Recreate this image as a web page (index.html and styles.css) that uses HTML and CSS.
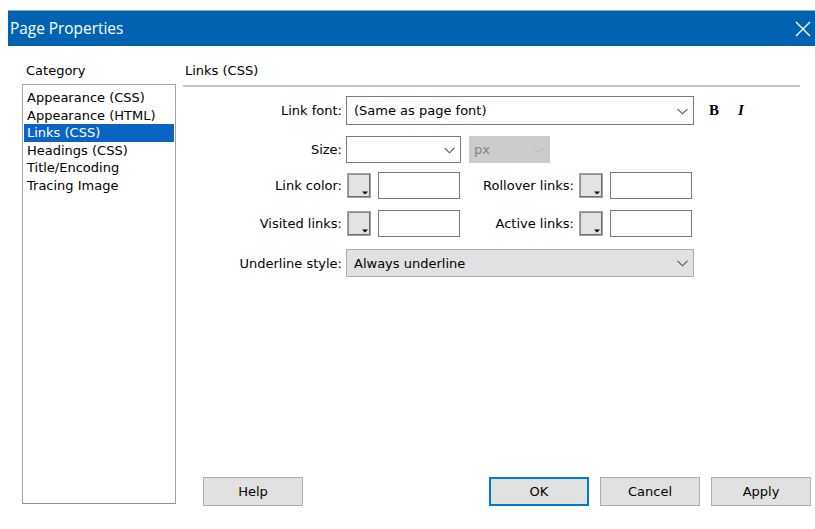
FILE: index.html
```html
<!DOCTYPE html>
<html lang="en">
<head>
<meta charset="utf-8">
<title>Page Properties</title>
<link rel="stylesheet" href="styles.css">
</head>
<body>
<div class="dialog">
  <header class="titlebar">
    <span class="title">Page Properties</span>
    <svg class="close" width="16" height="16" viewBox="0 0 16 16"><path d="M1 1L15 15M15 1L1 15" stroke="#fff" stroke-width="1.4" fill="none"/></svg>
  </header>

  <div class="body">
    <aside class="sidebar">
      <div class="caption">Category</div>
      <ul class="list">
        <li>Appearance (CSS)</li>
        <li>Appearance (HTML)</li>
        <li class="selected">Links (CSS)</li>
        <li>Headings (CSS)</li>
        <li>Title/Encoding</li>
        <li>Tracing Image</li>
      </ul>
    </aside>

    <main class="panel">
      <div class="caption heading">Links (CSS)</div>
      <div class="rule"></div>

      <div class="form">
        <div class="row r1">
          <label class="lbl">Link font:</label>
          <div class="select wide"><span>(Same as page font)</span>
            <svg class="chev" width="11" height="7" viewBox="0 0 11 7"><path d="M0.5 0.8L5.5 5.8L10.5 0.8" stroke="#555" stroke-width="1.1" fill="none"/></svg>
          </div>
          <span class="fmt bold">B</span>
          <span class="fmt italic">I</span>
        </div>

        <div class="row r2">
          <label class="lbl">Size:</label>
          <div class="select size">
            <svg class="chev" width="11" height="7" viewBox="0 0 11 7"><path d="M0.5 0.8L5.5 5.8L10.5 0.8" stroke="#555" stroke-width="1.1" fill="none"/></svg>
          </div>
          <div class="select unit disabled"><span>px</span>
            <svg class="chev" width="11" height="7" viewBox="0 0 11 7"><path d="M0.5 0.8L5.5 5.8L10.5 0.8" stroke="#bbb" stroke-width="1.1" fill="none"/></svg>
          </div>
        </div>

        <div class="row r3">
          <label class="lbl">Link color:</label>
          <span class="swatch"><svg width="24" height="25" viewBox="0 0 24 25"><rect x="0.5" y="0.5" width="23" height="24" fill="#e3e3e3" stroke="#a3a3a3"/><path d="M1.5 23V1.5H22" stroke="#8e8e8e" fill="none"/><path d="M22.5 1V23.5H1" stroke="#6c6c6c" fill="none"/><path d="M15 18.5H21L18 21.5Z" fill="#000"/></svg></span>
          <span class="textbox"></span>
          <label class="lbl lbl2">Rollover links:</label>
          <span class="swatch"><svg width="24" height="25" viewBox="0 0 24 25"><rect x="0.5" y="0.5" width="23" height="24" fill="#e3e3e3" stroke="#a3a3a3"/><path d="M1.5 23V1.5H22" stroke="#8e8e8e" fill="none"/><path d="M22.5 1V23.5H1" stroke="#6c6c6c" fill="none"/><path d="M15 18.5H21L18 21.5Z" fill="#000"/></svg></span>
          <span class="textbox"></span>
        </div>

        <div class="row r4">
          <label class="lbl">Visited links:</label>
          <span class="swatch"><svg width="24" height="25" viewBox="0 0 24 25"><rect x="0.5" y="0.5" width="23" height="24" fill="#e3e3e3" stroke="#a3a3a3"/><path d="M1.5 23V1.5H22" stroke="#8e8e8e" fill="none"/><path d="M22.5 1V23.5H1" stroke="#6c6c6c" fill="none"/><path d="M15 18.5H21L18 21.5Z" fill="#000"/></svg></span>
          <span class="textbox"></span>
          <label class="lbl lbl2">Active links:</label>
          <span class="swatch"><svg width="24" height="25" viewBox="0 0 24 25"><rect x="0.5" y="0.5" width="23" height="24" fill="#e3e3e3" stroke="#a3a3a3"/><path d="M1.5 23V1.5H22" stroke="#8e8e8e" fill="none"/><path d="M22.5 1V23.5H1" stroke="#6c6c6c" fill="none"/><path d="M15 18.5H21L18 21.5Z" fill="#000"/></svg></span>
          <span class="textbox"></span>
        </div>

        <div class="row r5">
          <label class="lbl">Underline style:</label>
          <div class="select wide grey"><span>Always underline</span>
            <svg class="chev" width="11" height="7" viewBox="0 0 11 7"><path d="M0.5 0.8L5.5 5.8L10.5 0.8" stroke="#555" stroke-width="1.1" fill="none"/></svg>
          </div>
        </div>
      </div>

      <div class="buttons">
        <button class="btn">Help</button>
        <span class="spacer"></span>
        <button class="btn default">OK</button>
        <button class="btn">Cancel</button>
        <button class="btn">Apply</button>
      </div>
    </main>
  </div>
</div>
</body>
</html>
```

FILE: styles.css
```css
* { box-sizing: border-box; }

html, body {
  margin: 0;
  padding: 0;
  background: #fff;
}

body {
  width: 815px;
  height: 529px;
  overflow: hidden;
  font-family: "DejaVu Sans", "Open Sans", sans-serif;
  font-size: 13px;
  color: #000;
}

.dialog {
  display: flex;
  flex-direction: column;
  height: 100%;
  padding-top: 10px;
}

/* window caption */
.titlebar {
  margin-left: 8px;
  height: 36px;
  background: #0063b1;
  border-top: 1px solid #8aa4bf;
  display: flex;
  align-items: center;
  padding: 0 4px 0 2px;
  color: #fff;
}

.title {
  font-family: "Open Sans", sans-serif;
  font-size: 15.4px;
  flex: 1;
  padding-bottom: 1px;
}

.body {
  flex: 1;
  display: flex;
  padding-top: 16px;
}

.caption {
  height: 18px;
  line-height: 18px;
}

/* category list */
.sidebar {
  margin-left: 22px;
  width: 154px;
  display: flex;
  flex-direction: column;
}

.sidebar .caption { padding-left: 4px; }

.list {
  list-style: none;
  margin: 4px 0 0;
  padding: 4px 1px 1px;
  height: 420px;
  border: 1px solid #a0a4aa;
  border-bottom-color: #8d939b;
}

.list li {
  height: 17.6px;
  line-height: 17.6px;
  padding-left: 3px;
  white-space: nowrap;
}

.list li.selected {
  background: #0a64c4;
  color: #fff;
}

/* right side */
.panel {
  flex: 1;
  margin-left: 7px;
  display: flex;
  flex-direction: column;
}

.heading { padding-left: 2px; }

.rule {
  margin-top: 5px;
  width: 617px;
  height: 2px;
  background: #c4c4c4;
}

.form {
  display: flex;
  flex-direction: column;
}

.row {
  display: flex;
  align-items: center;
}

.r1 { margin-top: 9px; height: 29px; }
.r2 { margin-top: 11px; height: 27px; }
.r3 { margin-top: 9px; height: 27px; }
.r4 { margin-top: 11px; height: 27px; }
.r5 { margin-top: 12px; height: 28px; }

.lbl {
  width: 160px;
  text-align: right;
  padding-right: 1px;
  color: #000;
  white-space: nowrap;
}

.lbl2 {
  width: 112px;
  margin-left: 0;
}

.select {
  position: relative;
  height: 100%;
  margin-left: 3px;
  border: 1px solid #7a7a7a;
  background: #fff;
  display: flex;
  align-items: center;
  padding-left: 7px;
}

.select .chev {
  position: absolute;
  right: 5px;
  top: 50%;
  margin-top: -3px;
}

.select.wide { width: 348px; }
.select.grey {
  background: #e1e1e1;
  border-color: #adadad;
}

.select.size { width: 115px; }

.select.unit {
  width: 81px;
  margin-left: 8px;
  background: #cccccc;
  border-color: #cccccc;
  color: #838383;
  padding-left: 4px;
}

.fmt {
  font-family: "Liberation Serif", serif;
  font-size: 15px;
  font-weight: bold;
}

.bold { margin-left: 15px; }
.italic { margin-left: 19px; font-style: italic; }

.swatch {
  margin-left: 4px;
  width: 24px;
  height: 25px;
  display: block;
}

.swatch svg { display: block; }

.textbox {
  margin-left: 7px;
  width: 82px;
  height: 27px;
  border: 1px solid #7a7a7a;
  background: #fff;
}

.r3 .lbl2,
.r4 .lbl2 { margin-left: 3px; }

/* dialog buttons */
.buttons {
  margin-top: auto;
  margin-bottom: 23px;
  display: flex;
  padding-left: 20px;
  padding-right: 4px;
  gap: 11px;
}

.spacer { flex: 1; }

.btn {
  width: 100px;
  height: 29px;
  background: #e1e1e1;
  border: 1px solid #adadad;
  font-family: inherit;
  font-size: 13px;
  color: #000;
  padding: 0;
}

.btn.default {
  border: 2px solid #0078d7;
}
```
